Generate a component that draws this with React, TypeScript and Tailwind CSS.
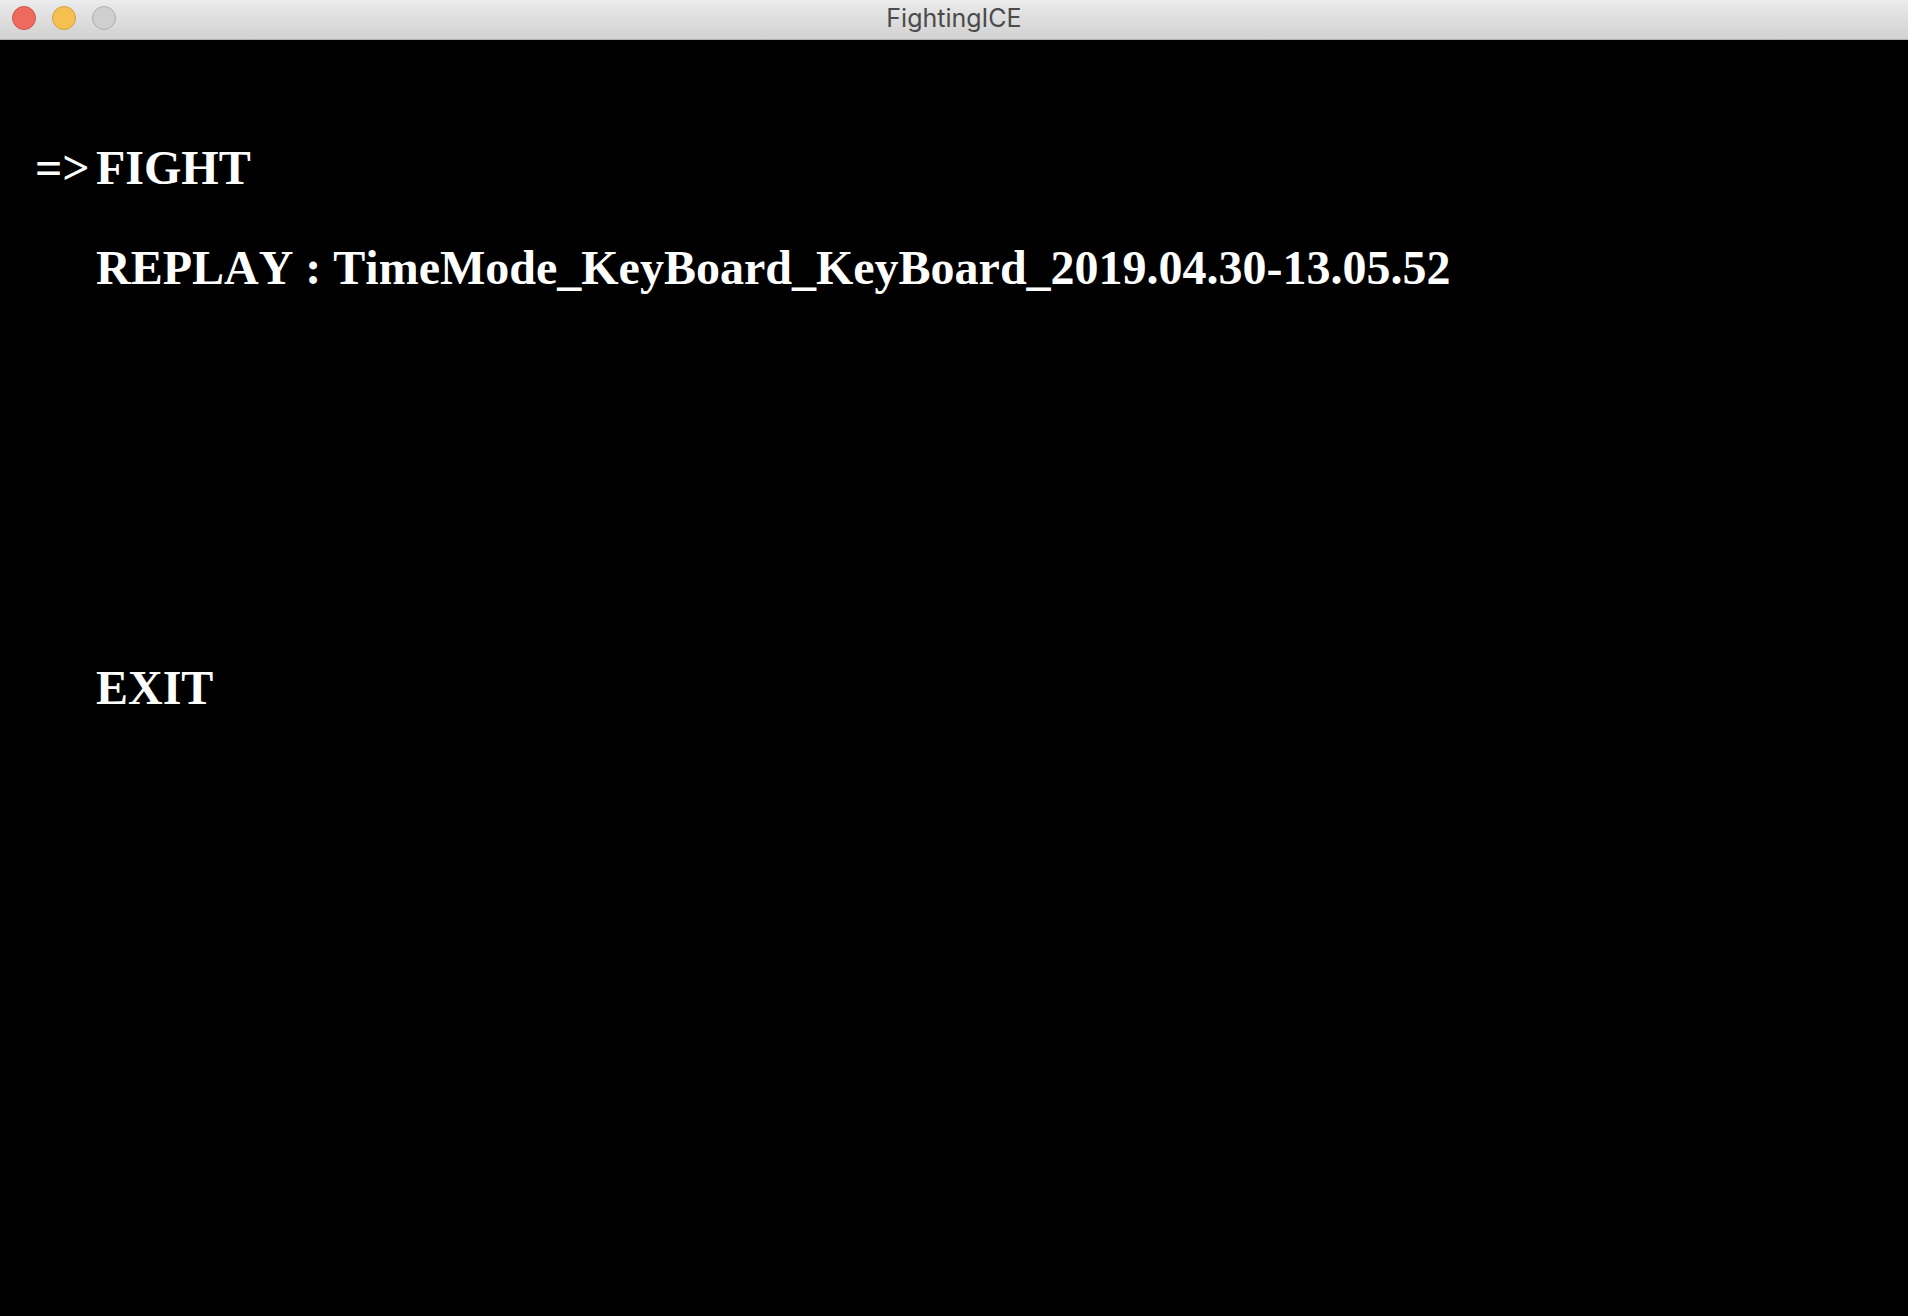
import { useState } from "react";

const windowControls = [
  { label: "Close", style: "border-[#cf554b] bg-[#ee6a5f]" },
  { label: "Minimize", style: "border-[#d1a03f] bg-[#f5c04f]" },
  { label: "Zoom", style: "border-[#aeaeae] bg-[#cfcfcf]" },
];

const menuItems = [
  { label: "FIGHT", style: "" },
  { label: "REPLAY : TimeMode_KeyBoard_KeyBoard_2019.04.30-13.05.52", style: "" },
  { label: "EXIT", style: "mt-80" },
];

function TitleBar() {
  return (
    <header className="grid h-10 grid-cols-[1fr_auto_1fr] items-center border-b border-[#b0b0b0] bg-linear-to-b from-[#ebebeb] to-[#d1d1d1] px-3 pb-[3px]">
      <div className="flex gap-4">
        {windowControls.map((control) => (
          <button
            key={control.label}
            type="button"
            aria-label={control.label}
            className={`size-6 rounded-full border ${control.style}`}
          />
        ))}
      </div>
      <h1 className="font-['Inter',sans-serif] text-[25px] leading-8 text-[#4b4b4b]">FightingICE</h1>
    </header>
  );
}

export default function App() {
  const [selected, setSelected] = useState(0);

  return (
    <div className="flex min-h-screen flex-col bg-black">
      <TitleBar />
      <main className="grow pt-26 pl-[35px]">
        <nav className="flex flex-col gap-13 font-['Liberation_Serif',serif] text-5xl leading-none font-bold text-white [font-kerning:none]">
          {menuItems.map((item, index) => (
            <button
              key={item.label}
              type="button"
              onClick={() => setSelected(index)}
              className={`flex text-left text-5xl leading-none outline-none ${item.style}`}
            >
              <span className="w-[61px] shrink-0">{selected === index ? "=>" : ""}</span>
              <span>{item.label}</span>
            </button>
          ))}
        </nav>
      </main>
    </div>
  );
}
